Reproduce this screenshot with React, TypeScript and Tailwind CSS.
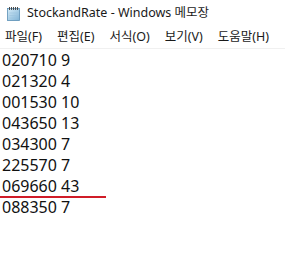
const ROWS = [
  "020710 9",
  "021320 4",
  "001530 10",
  "043650 13",
  "034300 7",
  "225570 7",
  "069660 43",
  "088350 7",
];

const MENUS = ["파일(F)", "편집(E)", "서식(O)", "보기(V)", "도움말(H)"];

function NotepadIcon() {
  return (
    <svg width="15" height="15" viewBox="0 0 15 15">
      <defs>
        <linearGradient id="pad" x1="0" y1="0" x2="1" y2="1">
          <stop offset="0" stopColor="#d6ecf8" />
          <stop offset="1" stopColor="#7fb3d6" />
        </linearGradient>
      </defs>
      <rect x="1.5" y="2.5" width="12" height="12" fill="url(#pad)" stroke="#5a8fb5" strokeWidth="0.8" />
      {[3, 5, 7, 9, 11].map((x) => (
        <rect key={x} x={x} y="1" width="1" height="3" fill="#4a4a4a" />
      ))}
      <line x1="3.5" y1="7" x2="11.5" y2="7" stroke="#9cc3de" strokeWidth="0.6" />
      <line x1="3.5" y1="9.5" x2="11.5" y2="9.5" stroke="#9cc3de" strokeWidth="0.6" />
      <line x1="3.5" y1="12" x2="11.5" y2="12" stroke="#9cc3de" strokeWidth="0.6" />
    </svg>
  );
}

export default function App() {
  return (
    <div
      className="w-[285px] h-[270px] bg-white overflow-hidden text-black"
      style={{ fontFamily: '"Noto Sans", "Noto Sans CJK KR", sans-serif' }}
    >
      {/* Title bar */}
      <div className="h-[26px] flex items-center pl-[6px] gap-[6px]">
        <NotepadIcon />
        <span className="text-[12.5px] leading-none text-[#1a1a1a]">
          StockandRate - Windows 메모장
        </span>
      </div>

      {/* Menu bar */}
      <div className="h-[23px] flex items-center pl-[5px] gap-[15px] border-b border-[#f0f0f0]">
        {MENUS.map((m) => (
          <span key={m} className="text-[12.5px] leading-none text-[#1a1a1a]">
            {m}
          </span>
        ))}
      </div>

      {/* Text area */}
      <div className="relative pt-[1px] pl-[2px]">
        {ROWS.map((r) => (
          <div key={r} className="h-[21px] leading-[21px] text-[16px] text-[#111]">
            {r}
          </div>
        ))}
        <div className="absolute left-0 top-[147px] w-[106px] h-[2px] bg-[#d01c28]" />
      </div>
    </div>
  );
}
